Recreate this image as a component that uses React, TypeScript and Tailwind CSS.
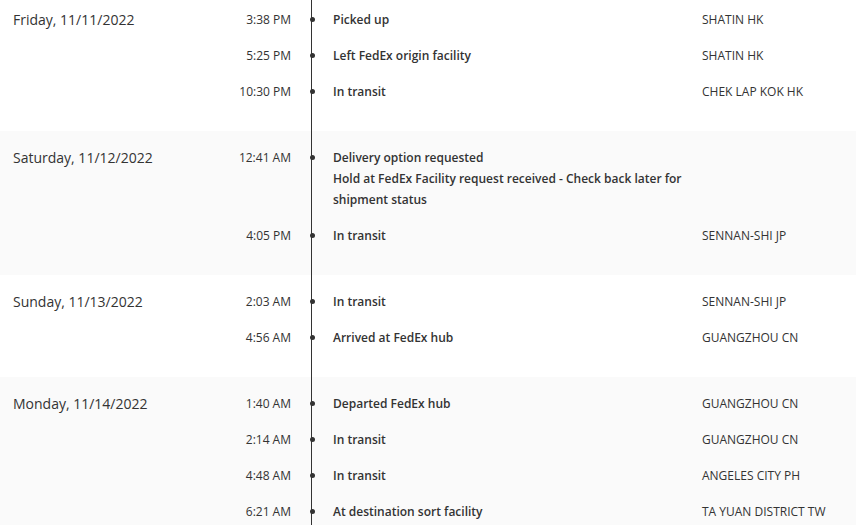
import React from "react";

type Scan = { time: string; desc: string[]; loc: string };
type Day = { date: string; scans: Scan[] };

const days: Day[] = [
  {
    date: "Friday, 11/11/2022",
    scans: [
      { time: "3:38 PM", desc: ["Picked up"], loc: "SHATIN HK" },
      { time: "5:25 PM", desc: ["Left FedEx origin facility"], loc: "SHATIN HK" },
      { time: "10:30 PM", desc: ["In transit"], loc: "CHEK LAP KOK HK" },
    ],
  },
  {
    date: "Saturday, 11/12/2022",
    scans: [
      {
        time: "12:41 AM",
        desc: [
          "Delivery option requested",
          "Hold at FedEx Facility request received - Check back later for shipment status",
        ],
        loc: "",
      },
      { time: "4:05 PM", desc: ["In transit"], loc: "SENNAN-SHI JP" },
    ],
  },
  {
    date: "Sunday, 11/13/2022",
    scans: [
      { time: "2:03 AM", desc: ["In transit"], loc: "SENNAN-SHI JP" },
      { time: "4:56 AM", desc: ["Arrived at FedEx hub"], loc: "GUANGZHOU CN" },
    ],
  },
  {
    date: "Monday, 11/14/2022",
    scans: [
      { time: "1:40 AM", desc: ["Departed FedEx hub"], loc: "GUANGZHOU CN" },
      { time: "2:14 AM", desc: ["In transit"], loc: "GUANGZHOU CN" },
      { time: "4:48 AM", desc: ["In transit"], loc: "ANGELES CITY PH" },
      { time: "6:21 AM", desc: ["At destination sort facility"], loc: "TA YUAN DISTRICT TW" },
    ],
  },
];

export default function App() {
  return (
    <div
      className="w-[856px] h-[525px] overflow-hidden bg-white text-[#333]"
      style={{ fontFamily: '"Open Sans", "Noto Sans", sans-serif' }}
    >
      <div className="relative -mt-[7px]">
        {/* timeline rail */}
        <div className="absolute left-[311px] top-0 bottom-0 w-px bg-[#333]" />

        {days.map((day, i) => (
          <section
            key={day.date}
            className={`flex pt-2 pb-[22px] ${i % 2 === 1 ? "bg-[#fafafa]" : "bg-white"}`}
          >
            <div className="w-[230px] pl-[13px] text-[14px] leading-[21px] py-[7.5px]">
              {day.date}
            </div>
            <div className="flex flex-col">
              {day.scans.map((s) => (
                <div key={s.time} className="flex py-[7.5px] text-[12px] leading-[21px]">
                  <div className="w-[61px] text-right whitespace-nowrap">{s.time}</div>
                  <div className="relative w-[42px]">
                    <span className="absolute left-[19px] top-[8px] w-[5px] h-[5px] rounded-full bg-[#333]" />
                  </div>
                  <div className="w-[369px] pr-1 font-semibold">
                    {s.desc.map((d) => (
                      <div key={d}>{d}</div>
                    ))}
                  </div>
                  <div className="whitespace-nowrap">{s.loc}</div>
                </div>
              ))}
            </div>
          </section>
        ))}
      </div>
    </div>
  );
}
